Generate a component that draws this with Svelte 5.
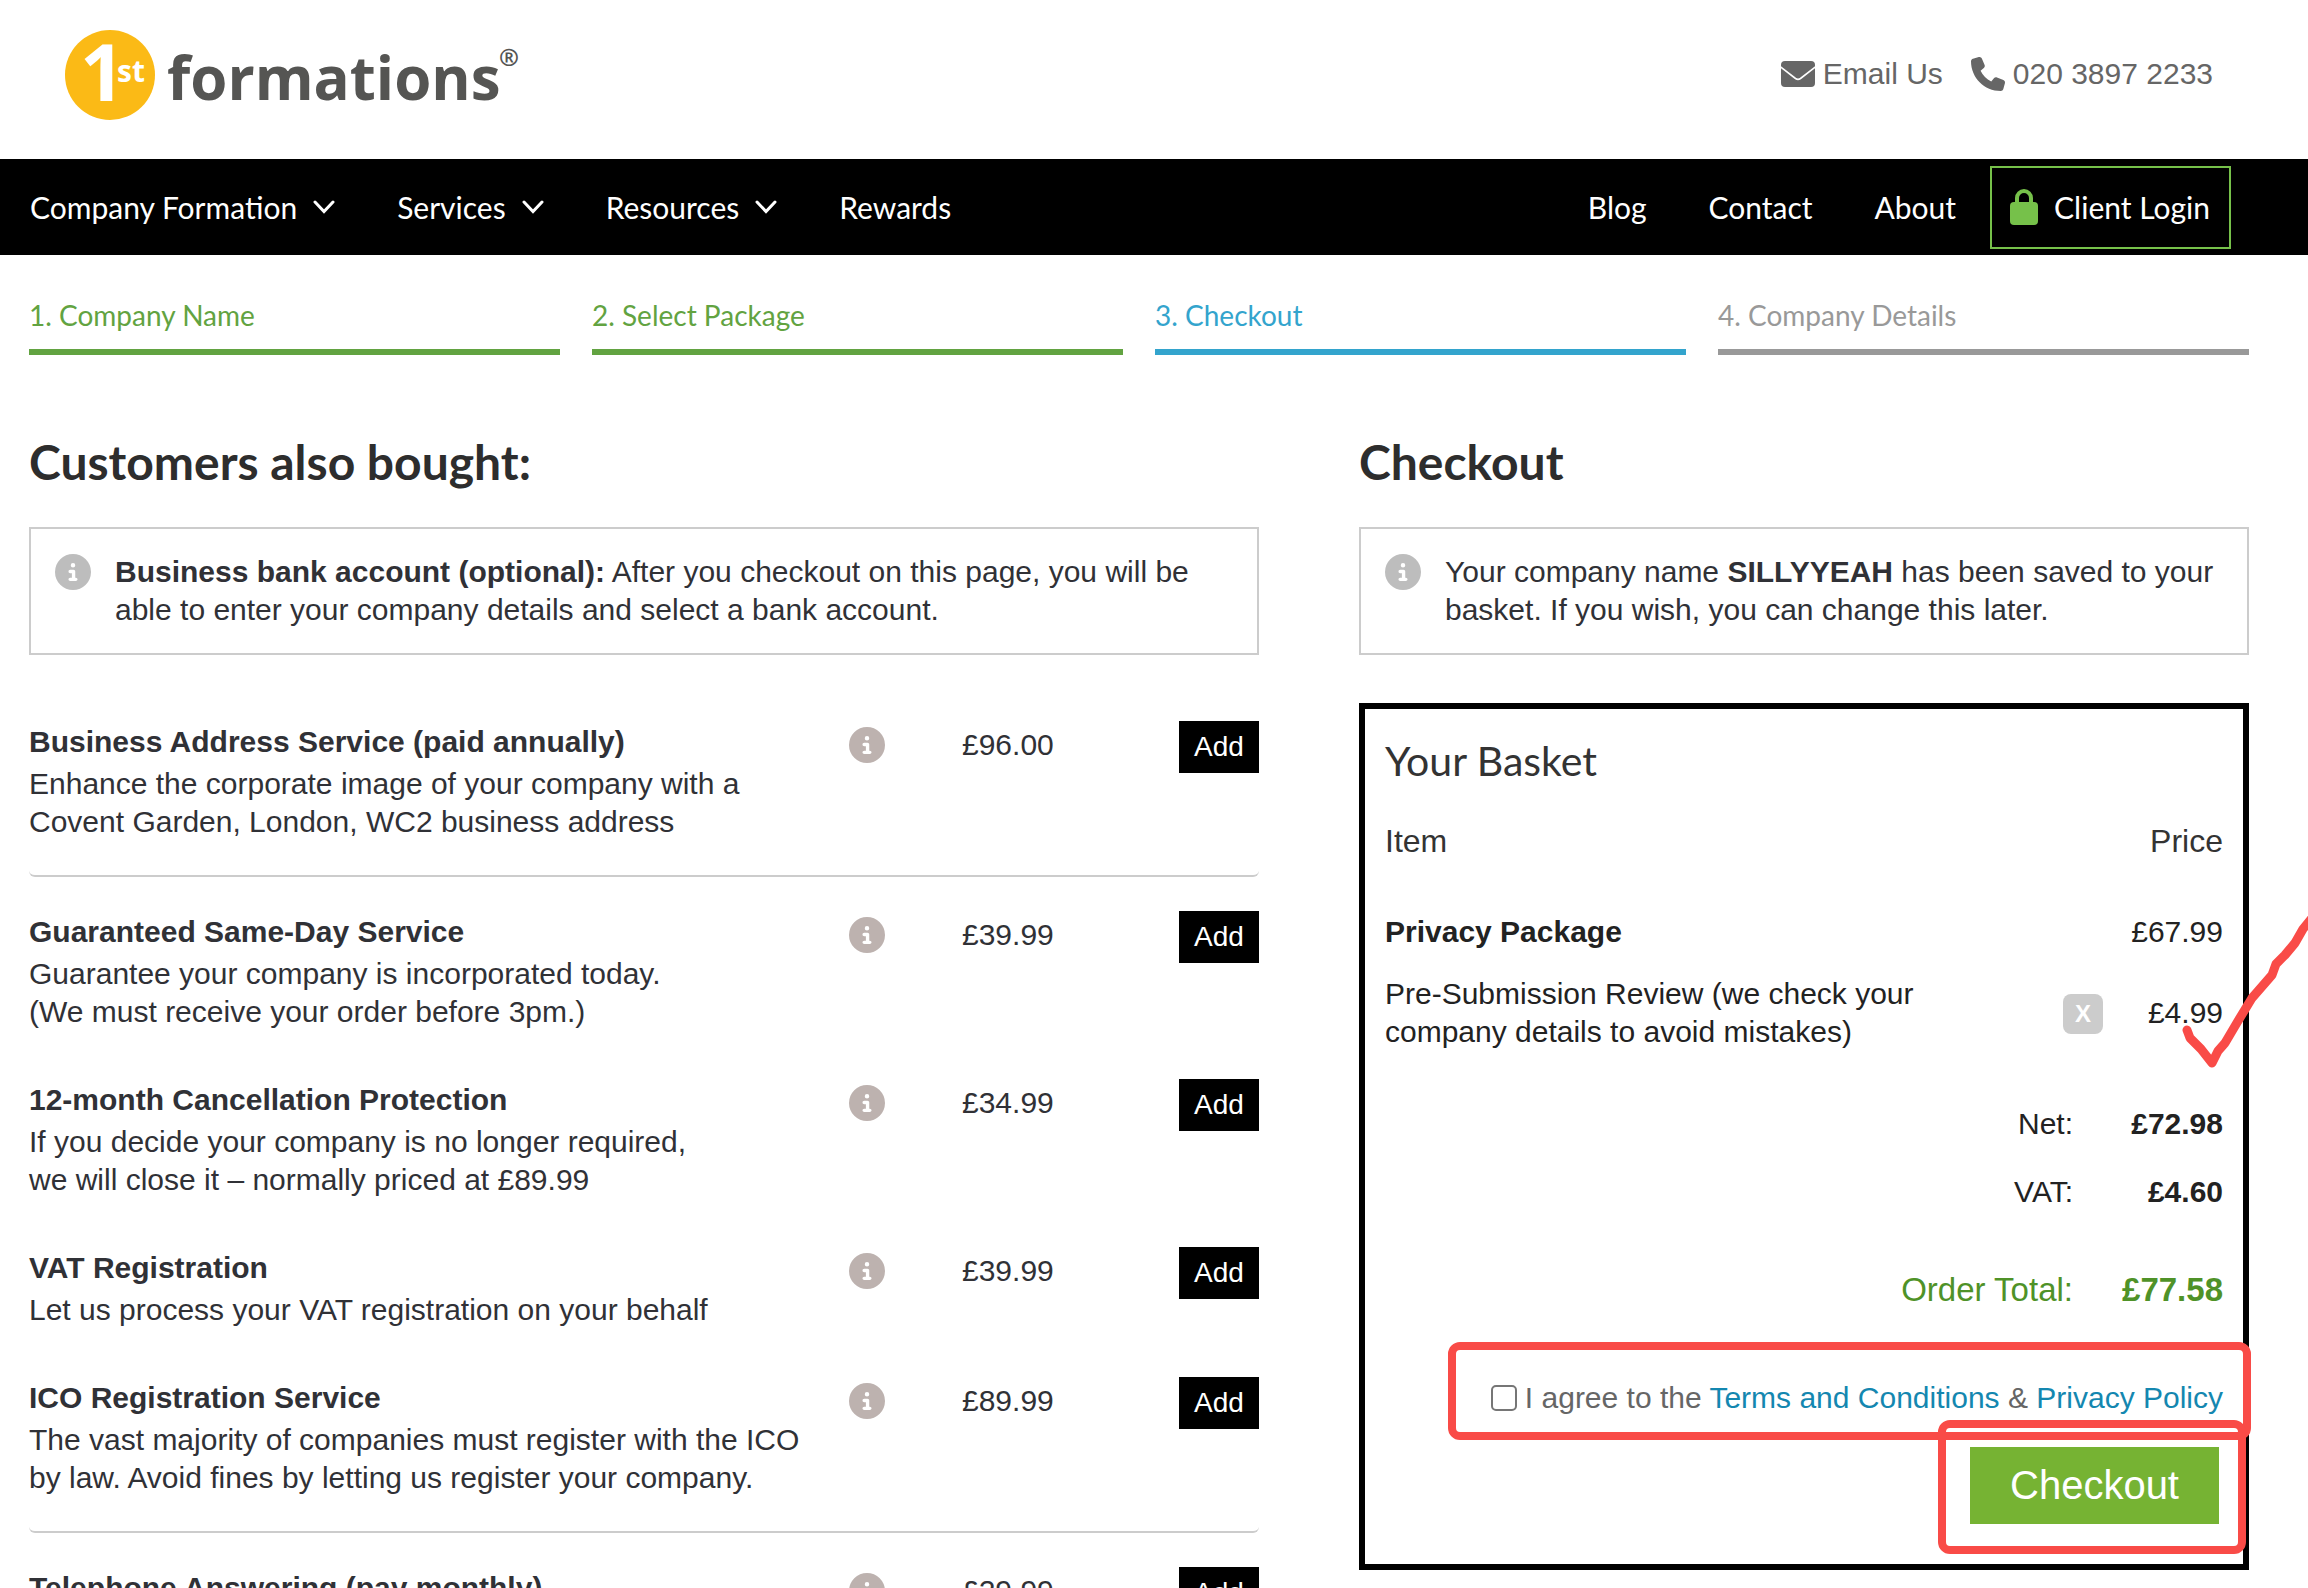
<script lang="ts">
  type Product = {
    name: string;
    lines: string[];
    price: string;
    divider?: boolean;
  };

  const menu = [
    { label: 'Company Formation', sub: true },
    { label: 'Services', sub: true },
    { label: 'Resources', sub: true },
    { label: 'Rewards', sub: false },
  ];
  const links = ['Blog', 'Contact', 'About'];

  const steps = [
    { label: '1. Company Name', state: 'done' },
    { label: '2. Select Package', state: 'done' },
    { label: '3. Checkout', state: 'current' },
    { label: '4. Company Details', state: 'todo' },
  ];

  const products: Product[] = [
    {
      name: 'Business Address Service (paid annually)',
      lines: ['Enhance the corporate image of your company with a', 'Covent Garden, London, WC2 business address'],
      price: '£96.00',
      divider: true,
    },
    {
      name: 'Guaranteed Same-Day Service',
      lines: ['Guarantee your company is incorporated today.', '(We must receive your order before 3pm.)'],
      price: '£39.99',
    },
    {
      name: '12-month Cancellation Protection',
      lines: ['If you decide your company is no longer required,', 'we will close it – normally priced at £89.99'],
      price: '£34.99',
    },
    {
      name: 'VAT Registration',
      lines: ['Let us process your VAT registration on your behalf'],
      price: '£39.99',
    },
    {
      name: 'ICO Registration Service',
      lines: ['The vast majority of companies must register with the ICO', 'by law. Avoid fines by letting us register your company.'],
      price: '£89.99',
      divider: true,
    },
    {
      name: 'Telephone Answering (pay monthly)',
      lines: [],
      price: '£29.99',
    },
  ];

  let agreed = $state(false);
</script>

{#snippet info()}
  <svg class="info" viewBox="0 0 512 512" aria-hidden="true">
    <path d="M256 512A256 256 0 1 0 256 0a256 256 0 1 0 0 512zM216 336h24V272H216c-13.3 0-24-10.7-24-24s10.7-24 24-24h48c13.3 0 24 10.7 24 24v88h8c13.3 0 24 10.7 24 24s-10.7 24-24 24H216c-13.3 0-24-10.7-24-24s10.7-24 24-24zm40-208a32 32 0 1 1 0 64 32 32 0 1 1 0-64z" />
  </svg>
{/snippet}

<div class="page">
  <header class="top">
    <a class="logo" href="#home" aria-label="1st formations">
      <svg viewBox="0 0 460 92" width="460" height="92">
        <circle cx="45" cy="47" r="45" fill="#fbba16" />
        <text x="15" y="73" font-size="78" font-weight="700" fill="#fff">1</text>
        <text x="52" y="54" font-size="30" font-weight="700" fill="#fff">st</text>
        <text x="102" y="72" font-size="60" font-weight="700" fill="#555553">formations</text>
        <text x="434" y="38" font-size="24" font-weight="700" fill="#555553">®</text>
      </svg>
    </a>
    <div class="contact">
      <a href="#email">
        <svg viewBox="0 0 34 34" aria-hidden="true">
          <rect y="4" width="34" height="26" rx="4" />
          <path d="M-1 9.500L14.500 21.500Q17 23.300 19.500 21.500L35 9.500" fill="none" stroke="#fff" stroke-width="1.600" />
        </svg>
        Email Us
      </a>
      <a href="#phone">
        <svg viewBox="0 0 512 512" aria-hidden="true">
          <path d="M164.900 24.600c-7.700-18.600-28-28.500-47.400-23.200l-88 24C12.100 30.200 0 46 0 64C0 311.400 200.600 512 448 512c18 0 33.800-12.100 38.600-29.500l24-88c5.300-19.400-4.600-39.700-23.200-47.400l-96-40c-16.300-6.800-35.200-2.100-46.300 11.600L304.700 368C234.300 334.700 177.300 277.700 144 207.300L193.300 167c13.700-11.200 18.400-30 11.600-46.300l-40-96z" />
        </svg>
        020 3897 2233
      </a>
    </div>
  </header>

  <nav class="nav">
    <div class="menu">
      {#each menu as item}
        <a href="#menu">
          {item.label}
          {#if item.sub}
            <svg class="chevron" viewBox="0 0 22 14" aria-hidden="true"><path d="M2 2l9 9.500L20 2" /></svg>
          {/if}
        </a>
      {/each}
    </div>
    <div class="side">
      {#each links as link}
        <a href="#link">{link}</a>
      {/each}
      <a class="login" href="#login">
        <svg viewBox="0 0 28 36" aria-hidden="true">
          <rect y="13" width="28" height="23" rx="4" />
          <path d="M7 16V9a7 7 0 0 1 14 0v7" fill="none" />
        </svg>
        Client Login
      </a>
    </div>
  </nav>

  <ol class="steps">
    {#each steps as step}
      <li class={step.state}>{step.label}</li>
    {/each}
  </ol>

  <main>
    <section>
      <h1>Customers also bought:</h1>
      <div class="notice">
        {@render info()}
        <p><strong>Business bank account (optional):</strong> After you checkout on this page, you will be able to enter your company details and select a bank account.</p>
      </div>

      <ul class="products">
        {#each products as product}
          <li class:divider={product.divider}>
            <div>
              <h3>{product.name}</h3>
              {#each product.lines as line}
                <p>{line}</p>
              {/each}
            </div>
            {@render info()}
            <span class="price">{product.price}</span>
            <button class="add" type="button">Add</button>
          </li>
        {/each}
      </ul>
    </section>

    <section>
      <h1>Checkout</h1>
      <div class="notice">
        {@render info()}
        <p>Your company name <strong>SILLYYEAH</strong> has been saved to your basket. If you wish, you can change this later.</p>
      </div>

      <div class="basket">
        <h2>Your Basket</h2>
        <table>
          <thead>
            <tr><th colspan="2">Item</th><th class="amount">Price</th></tr>
          </thead>
          <tbody>
            <tr class="package">
              <td colspan="2"><strong>Privacy Package</strong></td>
              <td class="amount">£67.99</td>
            </tr>
            <tr class="extra">
              <td>Pre-Submission Review (we check your<br />company details to avoid mistakes)</td>
              <td class="action"><button class="remove" type="button">X</button></td>
              <td class="amount">£4.99</td>
            </tr>
          </tbody>
          <tfoot>
            <tr><th colspan="2">Net:</th><td class="amount">£72.98</td></tr>
            <tr><th colspan="2">VAT:</th><td class="amount">£4.60</td></tr>
            <tr class="total"><th colspan="2">Order Total:</th><td class="amount">£77.58</td></tr>
          </tfoot>
        </table>

        <div class="terms marked">
          <input id="agree" type="checkbox" bind:checked={agreed} />
          <label for="agree">I agree to the <a href="#terms">Terms and Conditions</a> &amp; <a href="#privacy">Privacy Policy</a></label>
        </div>
        <div class="submit marked">
          <button class="checkout" type="button">Checkout</button>
        </div>

        <svg class="tick" viewBox="0 0 140 180" width="140" height="180" aria-hidden="true">
          <path d="M17 130L20 138L31 149L42 163L48 151L55 143L68 121L82 98L102 75L106 64L115 55L125 43L133 29L142 18" />
        </svg>
      </div>
    </section>
  </main>
</div>

<style>
  :global(body) {
    background: #fff;
  }

  .page {
    height: 100vh;
    overflow: hidden;
    color: #303136;
    font: 30px/38px "Liberation Sans", Arial, sans-serif;
  }
  .page :global(*) { box-sizing: border-box; }

  a { color: inherit; text-decoration: none; }
  h1, h2, h3, p, ul, ol { margin: 0; padding: 0; }
  ul, ol { list-style: none; }
  button { border: 0; border-radius: 0; padding: 0; font-family: inherit; cursor: pointer; }

  /* Top bar */
  .top {
    display: flex;
    align-items: center;
    justify-content: space-between;
    height: 159px;
    padding: 0 95px 12px 65px;
  }
  .logo svg { display: block; font-family: "Open Sans", sans-serif; }
  .contact { display: flex; gap: 28px; color: #666; }
  .contact a { display: flex; align-items: center; gap: 8px; }
  .contact svg { width: 34px; height: 34px; fill: #666; }

  /* Main navigation */
  .nav {
    display: flex;
    align-items: center;
    justify-content: space-between;
    height: 96px;
    padding: 0 77px 0 30px;
    background: #000;
    color: #fff;
    font-family: Lato, sans-serif;
  }
  .menu, .side, .nav a { display: flex; align-items: center; }
  .menu, .side { gap: 62px; }
  .menu a { gap: 16px; }
  .chevron { width: 22px; height: 14px; fill: none; stroke: #fff; stroke-width: 3; stroke-linecap: round; }
  .nav .login {
    gap: 16px;
    height: 83px;
    margin-left: -28px;
    padding: 0 19px 0 18px;
    border: 2px solid #76c14a;
  }
  .login svg { width: 28px; height: 36px; fill: #76c14a; stroke: #76c14a; stroke-width: 4; }
  .login rect { stroke: none; }

  /* Progress */
  .steps {
    display: grid;
    grid-template-columns: repeat(4, 1fr);
    gap: 32px;
    margin: 41px 59px 0 29px;
    font-family: Lato, sans-serif;
    font-size: 28px;
  }
  .steps li { padding-bottom: 15px; border-bottom: 6px solid; }
  .done { color: #62a341; }
  .current { color: #33a4cd; }
  .todo { color: #999; }

  main {
    display: grid;
    grid-template-columns: 123fr 89fr;
    gap: 100px;
    margin: 75px 59px 0 29px;
  }

  h1 {
    margin-bottom: 33px;
    color: #2d2d2d;
    font: 700 48px/64px Lato, sans-serif;
  }

  .info { flex: none; width: 36px; height: 36px; fill: #bdb2af; }

  .notice {
    display: flex;
    gap: 24px;
    padding: 24px;
    border: 2px solid #ccc;
  }
  .notice .info { margin-top: 1px; fill: #bdbdbd; }

  /* Upsell list */
  .products { margin-top: 66px; }
  .products li {
    display: grid;
    grid-template-columns: 1fr 36px 294px 80px;
    padding-bottom: 48px;
  }
  .products .divider {
    margin-bottom: 34px;
    padding-bottom: 34px;
    border-bottom: 2px solid #ccc;
    border-radius: 6px;
  }
  h3 { margin-bottom: 2px; font-size: 30px; line-height: 42px; }
  .products .info { margin-top: 6px; }
  .price { padding: 5px 0 0 77px; }
  .add { height: 52px; background: #000; color: #fff; font-size: 28px; }

  /* Basket */
  .basket {
    position: relative;
    margin-top: 48px;
    padding: 24px 20px 40px;
    border: 6px solid #000;
    color: #222;
  }
  h2 {
    margin-bottom: 28px;
    color: #333;
    font: 400 41px/56px Lato, sans-serif;
  }

  table { width: 100%; border-collapse: collapse; }
  th, td { padding: 0; text-align: left; font-weight: 400; }
  thead th { height: 48px; color: #333; font-size: 32px; }
  .amount { width: 120px; text-align: right; }
  .package td { padding: 48px 0 12px; }
  .extra td { padding: 12px 0 39px; }
  .action { text-align: right; }
  .remove {
    width: 40px;
    height: 40px;
    border-radius: 8px;
    background: #ccc;
    color: #fff;
    font-size: 24px;
    font-weight: 700;
    vertical-align: middle;
  }
  tfoot th { padding: 15px 30px 15px 0; text-align: right; }
  tfoot td { font-weight: 700; }
  .total { color: #4f9228; font-size: 33px; }
  .total th, .total td { padding-top: 45px; padding-bottom: 0; }

  .terms {
    display: flex;
    align-items: center;
    justify-content: flex-end;
    gap: 8px;
    margin-top: 70px;
    color: #666;
  }
  .terms input {
    appearance: none;
    width: 26px;
    height: 26px;
    margin: 0;
    border: 2px solid #767676;
    border-radius: 5px;
  }
  .terms a { color: #1487b0; }

  .submit { width: 249px; margin: 30px 4px 0 auto; }
  .checkout {
    width: 100%;
    height: 77px;
    background: #76b333;
    color: #fff;
    font-size: 40px;
  }

  /* Hand-drawn marks over the basket */
  .marked { position: relative; }
  .marked::after {
    content: "";
    position: absolute;
    border: 8px solid #f94b47;
    border-radius: 12px;
    pointer-events: none;
  }
  .terms::after { inset: -37px -28px -23px 63px; }
  .submit::after { inset: -27px -27px -30px -32px; }
  .tick {
    position: absolute;
    top: 191px;
    right: -67px;
    fill: none;
    stroke: #f94b47;
    stroke-width: 9;
    stroke-linecap: round;
    stroke-linejoin: round;
    pointer-events: none;
  }
</style>
